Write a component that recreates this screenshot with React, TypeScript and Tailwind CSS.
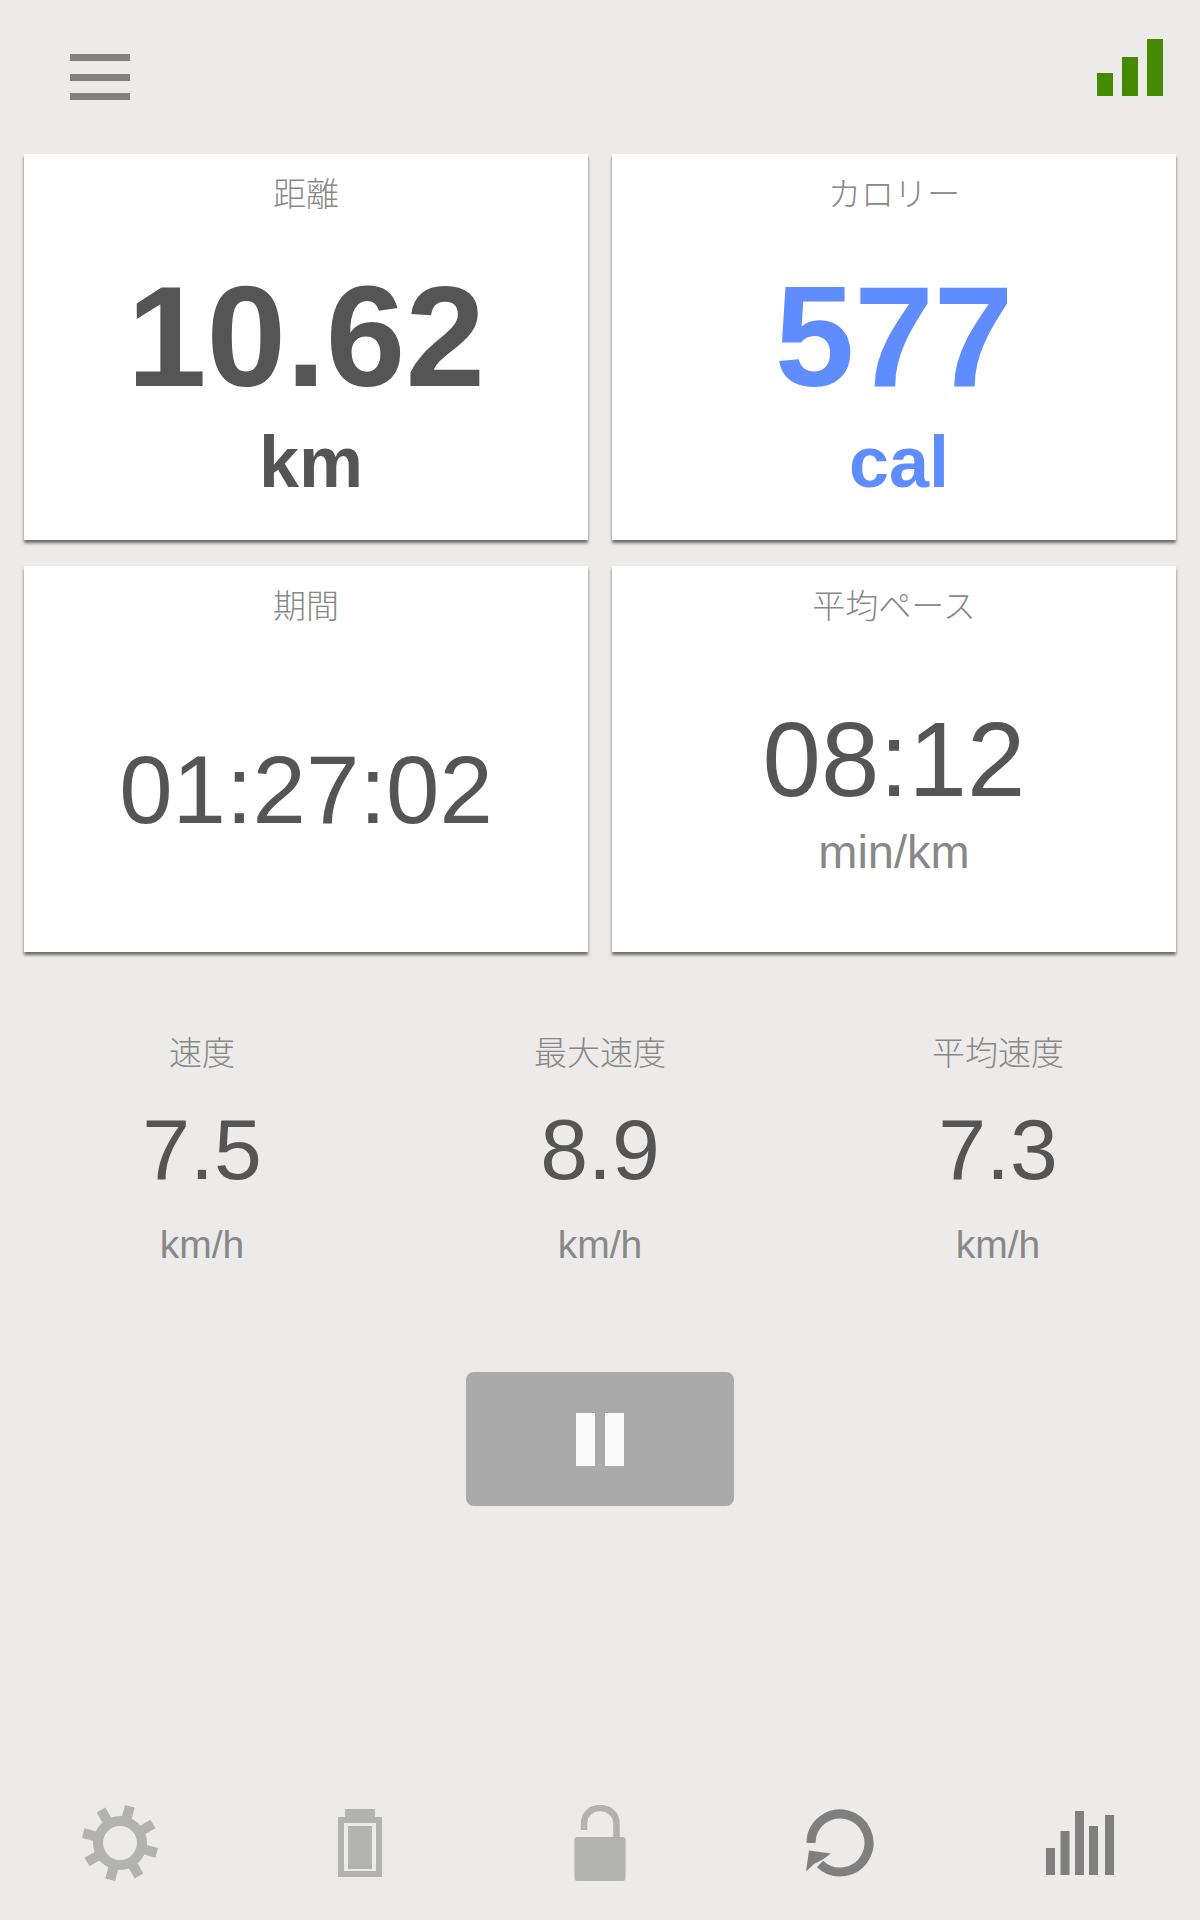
const cjk = "font-['Liberation_Sans','Noto_Sans_CJK_JP',sans-serif]";

function Card({ label, children }: { label: string; children: React.ReactNode }) {
  return (
    <div className="h-[386px] bg-white shadow-[0_3px_3px_rgba(0,0,0,0.55)] flex flex-col items-center">
      <div className="mt-[21px] h-[40px] text-[33px] leading-[40px] font-light text-[#888888]">{label}</div>
      {children}
    </div>
  );
}

function Speed({ label, value }: { label: string; value: string }) {
  return (
    <div className="flex flex-col items-center">
      <div className="h-[40px] text-[33px] leading-[40px] font-light text-[#888888]">{label}</div>
      <div className="mt-[33px] text-[86px] leading-[84px] text-[#555555]">{value}</div>
      <div className="mt-[32px] text-[39px] leading-[44px] text-[#888888]">km/h</div>
    </div>
  );
}

function Gear() {
  return (
    <svg width="80" height="80" viewBox="-40 -40 80 80" fill="#b2b2b0">
      <path fillRule="evenodd" d="M0-27A27 27 0 1 1 0 27A27 27 0 1 1 0-27ZM0-17A17 17 0 1 0 0 17A17 17 0 1 0 0-17Z" />
      {[15, 60, 105, 150, 195, 240, 285, 330].map((a) => (
        <rect key={a} x="-5" y="-38" width="10" height="14" transform={`rotate(${a})`} />
      ))}
    </svg>
  );
}

function Battery() {
  return (
    <svg width="44" height="68" viewBox="0 0 44 68" fill="#b2b2b0">
      <rect x="7" y="0" width="30" height="9" />
      <path fillRule="evenodd" d="M0 8H44V68H0ZM6 14V62H38V14Z" />
      <rect x="10" y="17" width="24" height="43" />
    </svg>
  );
}

function Lock() {
  return (
    <svg width="52" height="76" viewBox="0 0 52 76" fill="none">
      <path d="M10 25V19C10 9 17 3 26 3S42.500 9 42.500 19V34" stroke="#b2b2b0" strokeWidth="6.500" />
      <rect x="0.500" y="32" width="51" height="44" rx="3" fill="#b2b2b0" />
    </svg>
  );
}

function Refresh() {
  return (
    <svg width="70" height="68" viewBox="0 0 70 68" fill="none">
      <path d="M6 34A29 29 0 1 1 15 55" stroke="#7f7f7f" strokeWidth="9" />
      <path d="M4 41.500L26 44.500L17 51L9 55L1 62.500Z" fill="#7f7f7f" />
    </svg>
  );
}

function Bars() {
  return (
    <svg width="70" height="64" viewBox="0 0 70 64" fill="#7f7f7f">
      <rect x="1" y="37" width="9" height="27" />
      <rect x="15.500" y="20" width="9" height="44" />
      <rect x="30" y="0" width="9" height="64" />
      <rect x="44" y="15" width="9" height="49" />
      <rect x="60" y="4" width="9" height="60" />
    </svg>
  );
}

export default function App() {
  return (
    <div className={`${cjk} w-[1200px] h-[1920px] bg-[#ecebe9] flex flex-col`}>
      <div className="h-[154px] flex justify-between pl-[70px] pr-[37px]">
        <div className="mt-[54px] w-[60px] h-[46px] flex flex-col justify-between">
          <div className="h-[7px] bg-[#82817f]" />
          <div className="h-[7px] bg-[#82817f]" />
          <div className="h-[7px] bg-[#82817f]" />
        </div>
        <div className="mt-[39px] h-[57px] flex items-end gap-[9px]">
          <div className="w-[16px] h-[23px] bg-[#458a00]" />
          <div className="w-[16px] h-[39px] bg-[#458a00]" />
          <div className="w-[16px] h-[57px] bg-[#458a00]" />
        </div>
      </div>

      <div className="grid grid-cols-2 gap-x-[24px] gap-y-[26px] px-[24px]">
        <Card label="距離">
          <div className="mt-[52px] text-[143px] leading-[140px] font-bold text-[#555555]">10.62</div>
          <div className="ml-[10px] mt-[15px] text-[72px] leading-[80px] font-bold text-[#555555]">km</div>
        </Card>
        <Card label="カロリー">
          <div className="mt-[52px] text-[143px] leading-[140px] font-bold text-[#5f8cff]">577</div>
          <div className="ml-[10px] mt-[15px] text-[72px] leading-[80px] font-bold text-[#5f8cff]">cal</div>
        </Card>
        <Card label="期間">
          <div className="mt-[115px] text-[96px] leading-[96px] text-[#555555]">01:27:02</div>
        </Card>
        <Card label="平均ペース">
          <div className="mt-[81px] text-[105px] leading-[104px] text-[#555555]">08:12</div>
          <div className="mt-[12px] text-[47px] leading-[56px] text-[#888888]">min/km</div>
        </Card>
      </div>

      <div className="mt-[82px] grid grid-cols-3 px-[3px]">
        <Speed label="速度" value="7.5" />
        <Speed label="最大速度" value="8.9" />
        <Speed label="平均速度" value="7.3" />
      </div>

      <div className="mt-[105px] self-center w-[268px] h-[134px] rounded-[8px] bg-[#aaaaaa] flex items-center justify-center gap-[10px]">
        <div className="w-[19px] h-[53px] bg-[#fafafa]" />
        <div className="w-[19px] h-[53px] bg-[#fafafa]" />
      </div>

      <div className="mt-auto mb-[37px] grid grid-cols-5 items-center justify-items-center">
        <Gear />
        <Battery />
        <Lock />
        <Refresh />
        <Bars />
      </div>
    </div>
  );
}
